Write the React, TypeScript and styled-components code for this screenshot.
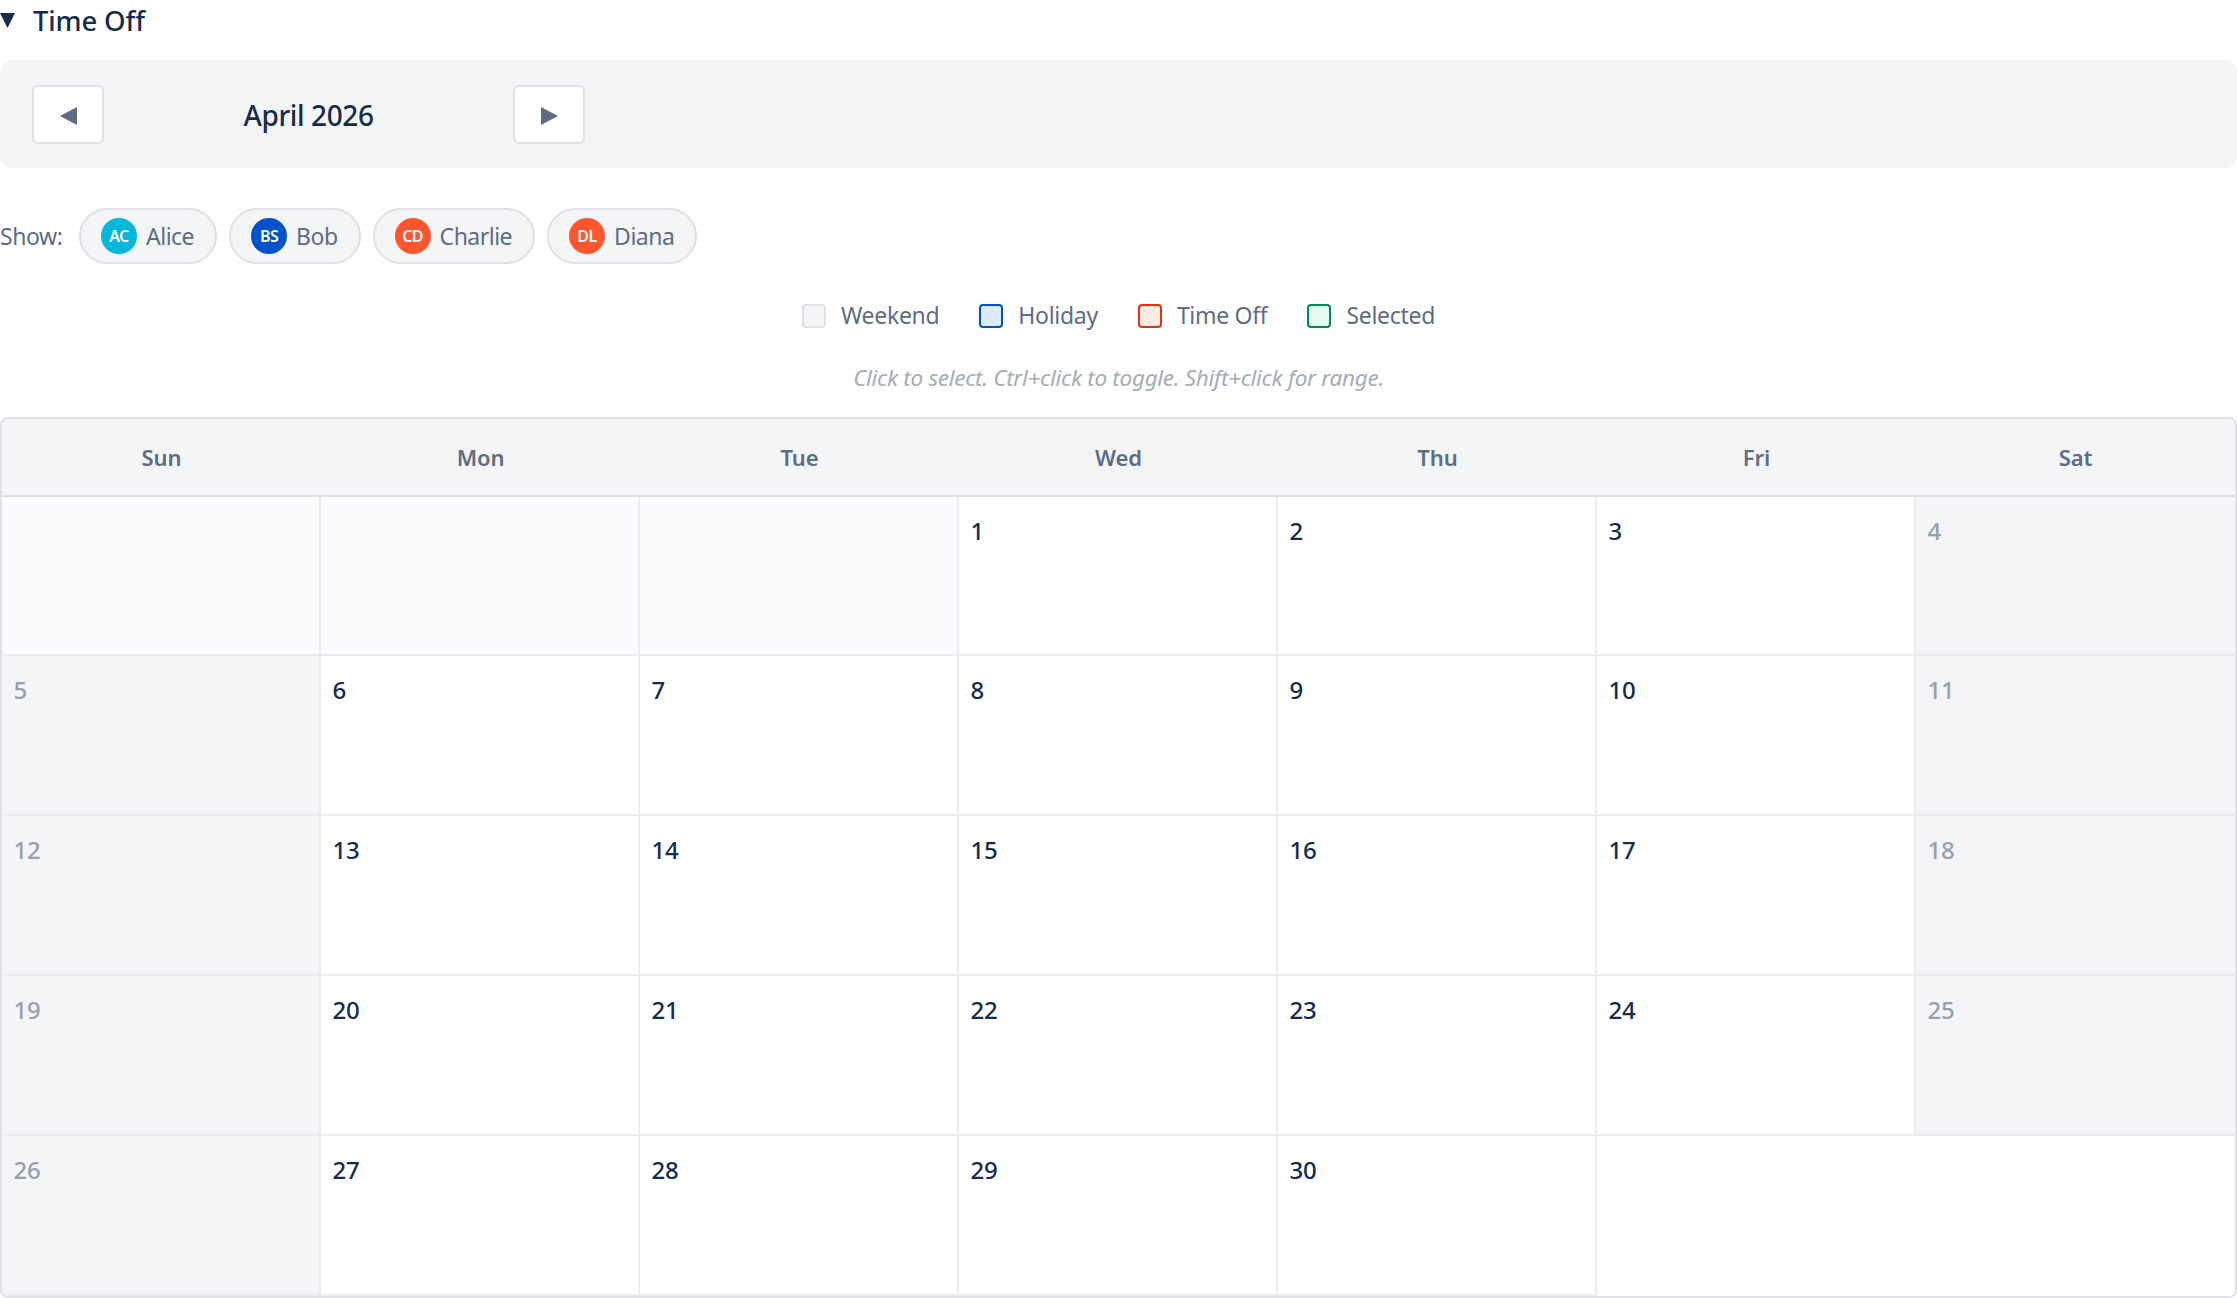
import React from "react";
import styled, { createGlobalStyle } from "styled-components";

const Global = createGlobalStyle`
  html, body { margin: 0; padding: 0; background: #fff; overflow: hidden; }
  body { font-family: "Noto Sans", "Open Sans", sans-serif; color: #172B4D; }
  * { box-sizing: border-box; }
`;

const Page = styled.div`
  width: 2237px;
  height: 1298px;
  display: flex;
  flex-direction: column;
`;

const Title = styled.div`
  height: 40px;
  display: flex;
  align-items: center;
  gap: 18px;
  font-size: 27.5px;
  font-weight: 500;
  letter-spacing: -0.15px;
  color: #172B4D;
`;

const Panel = styled.div`
  margin-top: 20px;
  height: 108px;
  background: #F4F5F7;
  border-radius: 12px;
  padding: 0 32px;
  display: flex;
  align-items: center;
`;

const NavButton = styled.button`
  width: 72px;
  height: 59px;
  padding: 3px 0 0;
  background: #fff;
  border: 2px solid #DFE1E6;
  border-radius: 6px;
  display: flex;
  align-items: center;
  justify-content: center;
`;

const Month = styled.div`
  width: 409px;
  padding-top: 1px;
  text-align: center;
  font-size: 28px;
  font-weight: 500;
  letter-spacing: -0.4px;
  color: #172B4D;
`;

const ChipRow = styled.div`
  margin-top: 40px;
  height: 56px;
  display: flex;
  align-items: center;
  gap: 12px;
`;

const ShowLabel = styled.span`
  font-size: 23px;
  letter-spacing: -0.4px;
  color: #5E6C84;
  margin-right: 4px;
  width: 63px;
`;

const Chip = styled.div`
  height: 56px;
  padding: 0 21px 0 20px;
  display: flex;
  align-items: center;
  gap: 9px;
  background: #F4F5F7;
  border: 2px solid #DFE1E6;
  border-radius: 28px;
  font-size: 23px;
  letter-spacing: -0.5px;
  color: #5E6C84;
`;

const Avatar = styled.span<{ $bg: string }>`
  width: 36px;
  height: 36px;
  border-radius: 50%;
  background: ${(p) => p.$bg};
  color: #fff;
  font-size: 16px;
  font-weight: 600;
  letter-spacing: -0.5px;
  display: flex;
  align-items: center;
  justify-content: center;
`;

const Legend = styled.div`
  margin-top: 34px;
  height: 34px;
  display: flex;
  justify-content: center;
  align-items: center;
  gap: 40px;
`;

const LegendItem = styled.div`
  display: flex;
  align-items: center;
  gap: 15px;
  font-size: 23px;
  letter-spacing: -0.3px;
  color: #5E6C84;
`;

const Swatch = styled.span<{ $bg: string; $border: string }>`
  width: 24px;
  height: 24px;
  margin-top: 2px;
  border-radius: 4px;
  background: ${(p) => p.$bg};
  border: 2px solid ${(p) => p.$border};
`;

const Hint = styled.div`
  margin-top: 28px;
  height: 36px;
  line-height: 36px;
  text-align: center;
  font-size: 22.5px;
  font-style: italic;
  letter-spacing: -0.3px;
  color: #A5ADBA;
`;

const Calendar = styled.div`
  margin-top: 21px;
  height: 881px;
  border: 2px solid #DFE1E6;
  border-radius: 8px;
  overflow: hidden;
  display: grid;
  grid-template-columns: repeat(7, 1fr);
  grid-template-rows: 77.5px repeat(5, 159.9px);
`;

const DayHead = styled.div`
  background: #F4F5F7;
  border-bottom: 2px solid #DFE1E6;
  display: flex;
  align-items: center;
  justify-content: center;
  font-size: 22px;
  font-weight: 600;
  letter-spacing: -0.1px;
  color: #5E6C84;
`;

type Kind = "empty" | "day" | "weekend";

const bg: Record<Kind, string> = { empty: "#FAFBFC", day: "#fff", weekend: "#F4F5F7" };

const Cell = styled.div<{ $kind: Kind; $last: boolean }>`
  background: ${(p) => bg[p.$kind]};
  border-right: ${(p) => (p.$last ? "none" : "2px solid #EBECF0")};
  border-bottom: 2px solid #EBECF0;
  padding: 18px 11.5px;
  font-size: 24px;
  line-height: 32px;
  font-weight: 500;
  letter-spacing: -0.3px;
  color: ${(p) => (p.$kind === "weekend" ? "#97A0AF" : "#172B4D")};
`;

const Trailing = styled.div`
  grid-column: span 2;
  background: #fff;
`;

const Glyph = ({ w, h, points, color }: { w: number; h: number; points: string; color: string }) => (
  <svg width={w} height={h} viewBox={`0 0 ${w} ${h}`} style={{ display: "block" }}>
    <polygon points={points} fill={color} />
  </svg>
);

const people = [
  { id: "AC", name: "Alice", color: "#00B8D9" },
  { id: "BS", name: "Bob", color: "#0052CC" },
  { id: "CD", name: "Charlie", color: "#FF5630" },
  { id: "DL", name: "Diana", color: "#FF5630" },
];

const legend = [
  { label: "Weekend", bg: "#F4F5F7", border: "#DFE1E6" },
  { label: "Holiday", bg: "#DEEBFF", border: "#0052CC" },
  { label: "Time Off", bg: "#FFEBE6", border: "#DE350B" },
  { label: "Selected", bg: "#E3FCEF", border: "#00875A" },
];

const days = ["Sun", "Mon", "Tue", "Wed", "Thu", "Fri", "Sat"];

export default function App() {
  const cells: React.ReactNode[] = [];
  for (let i = 0; i < 33; i++) {
    const d = i - 2;
    const col = i % 7;
    const kind: Kind = d < 1 ? "empty" : col === 0 || col === 6 ? "weekend" : "day";
    cells.push(
      <Cell key={i} $kind={kind} $last={col === 6}>
        {d >= 1 ? d : ""}
      </Cell>
    );
  }
  return (
    <Page>
      <Global />
      <Title>
        <Glyph w={15} h={15} points="0,0 15,0 7.5,15" color="#172B4D" />
        Time Off
      </Title>
      <Panel>
        <NavButton aria-label="Previous">
          <Glyph w={17} h={18} points="17,0 17,18 0,9" color="#5E6C84" />
        </NavButton>
        <Month>April 2026</Month>
        <NavButton aria-label="Next">
          <Glyph w={17} h={18} points="0,0 17,9 0,18" color="#5E6C84" />
        </NavButton>
      </Panel>
      <ChipRow>
        <ShowLabel>Show:</ShowLabel>
        {people.map((p) => (
          <Chip key={p.id}>
            <Avatar $bg={p.color}>{p.id}</Avatar>
            {p.name}
          </Chip>
        ))}
      </ChipRow>
      <Legend>
        {legend.map((l) => (
          <LegendItem key={l.label}>
            <Swatch $bg={l.bg} $border={l.border} />
            {l.label}
          </LegendItem>
        ))}
      </Legend>
      <Hint>Click to select. Ctrl+click to toggle. Shift+click for range.</Hint>
      <Calendar>
        {days.map((d) => (
          <DayHead key={d}>{d}</DayHead>
        ))}
        {cells}
        <Trailing />
      </Calendar>
    </Page>
  );
}
